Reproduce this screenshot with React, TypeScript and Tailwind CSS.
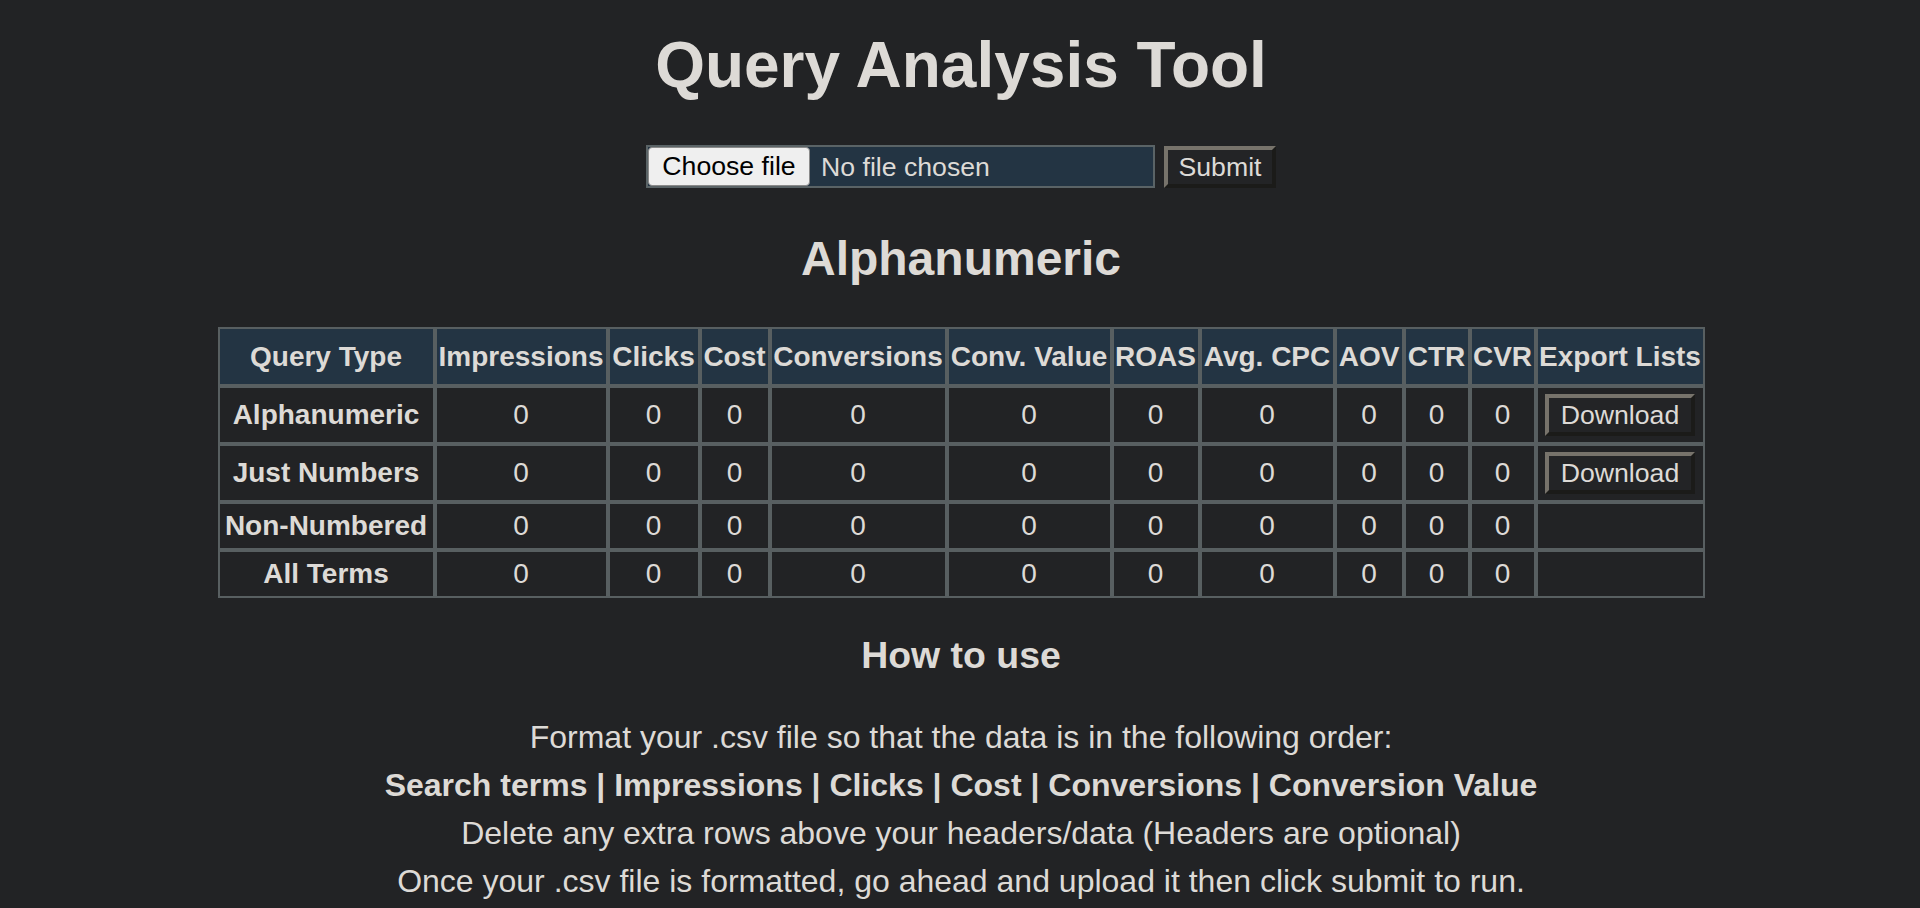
import React from "react";

const headers = [
  "Query Type",
  "Impressions",
  "Clicks",
  "Cost",
  "Conversions",
  "Conv. Value",
  "ROAS",
  "Avg. CPC",
  "AOV",
  "CTR",
  "CVR",
  "Export Lists",
];

const colClasses = [
  "w-[217px]",
  "w-[173px]",
  "w-[92px]",
  "w-[70px]",
  "w-[177px]",
  "w-[165px]",
  "w-[88px]",
  "w-[135px]",
  "w-[69px]",
  "w-[66px]",
  "w-[66px]",
  "w-[169px]",
];

const rows = [
  { name: "Alphanumeric", download: true },
  { name: "Just Numbers", download: true },
  { name: "Non-Numbered", download: false },
  { name: "All Terms", download: false },
];

function OutsetButton({ label, className }: { label: string; className: string }) {
  return (
    <button
      type="button"
      className={
        "border-4 border-t-[#77736b] border-l-[#77736b] border-b-[#1b1b19] border-r-[#1b1b19] bg-[#232426] text-[26.67px] leading-[30px] text-[#dddad6] px-[10px] " +
        className
      }
    >
      {label}
    </button>
  );
}

export default function App() {
  return (
    <div
      className="min-h-[908px] w-full bg-[#222325] text-[#dddad6] flex flex-col items-center pl-[2px]"
      style={{ fontFamily: '"Liberation Sans", Arial, sans-serif' }}
    >
      <h1 className="mt-[28px] text-[64px] leading-[74px] font-bold">Query Analysis Tool</h1>

      <div className="mt-[43px] flex items-center">
        <div className="w-[509px] h-[43px] border-2 border-[#5a6366] bg-[#233443] flex items-center">
          <span className="h-[39px] w-[162px] rounded-[4px] border border-[#8a8a8a] bg-[#efefef] text-black text-[26.67px] leading-[37px] flex items-center justify-center">
            Choose file
          </span>
          <span className="ml-[11px] text-[26.67px] leading-[30px] text-[#dddad6]">No file chosen</span>
        </div>
        <OutsetButton label="Submit" className="ml-[9px] h-[42px] w-[112px]" />
      </div>

      <h2 className="mt-[43px] text-[48px] leading-[55px] font-bold">Alphanumeric</h2>

      <table className="mt-[41px] table-fixed border-separate border-spacing-0 w-[1487px] text-[28px]">
        <colgroup>
          {colClasses.map((c, i) => (
            <col key={i} className={c} />
          ))}
        </colgroup>
        <thead>
          <tr>
            {headers.map((h) => (
              <th
                key={h}
                className="border-2 border-[#585f61] bg-[#233443] px-0 py-[11px] leading-[33px] font-bold text-center whitespace-nowrap"
              >
                {h}
              </th>
            ))}
          </tr>
        </thead>
        <tbody>
          {rows.map((r) => (
            <tr key={r.name}>
              <td className="border-2 border-[#585f61] px-0 py-[6px] leading-[32px] font-bold text-center whitespace-nowrap">
                {r.name}
              </td>
              {Array.from({ length: 10 }).map((_, i) => (
                <td
                  key={i}
                  className="border-2 border-[#585f61] px-0 py-[6px] leading-[32px] text-center"
                >
                  0
                </td>
              ))}
              <td className="border-2 border-[#585f61] px-0 py-[6px] leading-[32px] text-center">
                {r.download ? (
                  <OutsetButton label="Download" className="block mx-auto h-[42px] w-[150px]" />
                ) : null}
              </td>
            </tr>
          ))}
        </tbody>
      </table>

      <h3 className="mt-[36px] text-[37.44px] leading-[43px] font-bold">How to use</h3>

      <div className="mt-[36px] text-[32px] leading-[48px] text-center">
        <p>Format your .csv file so that the data is in the following order:</p>
        <p className="font-bold">
          Search terms | Impressions | Clicks | Cost | Conversions | Conversion Value
        </p>
        <p>Delete any extra rows above your headers/data (Headers are optional)</p>
        <p>Once your .csv file is formatted, go ahead and upload it then click submit to run.</p>
      </div>
    </div>
  );
}
